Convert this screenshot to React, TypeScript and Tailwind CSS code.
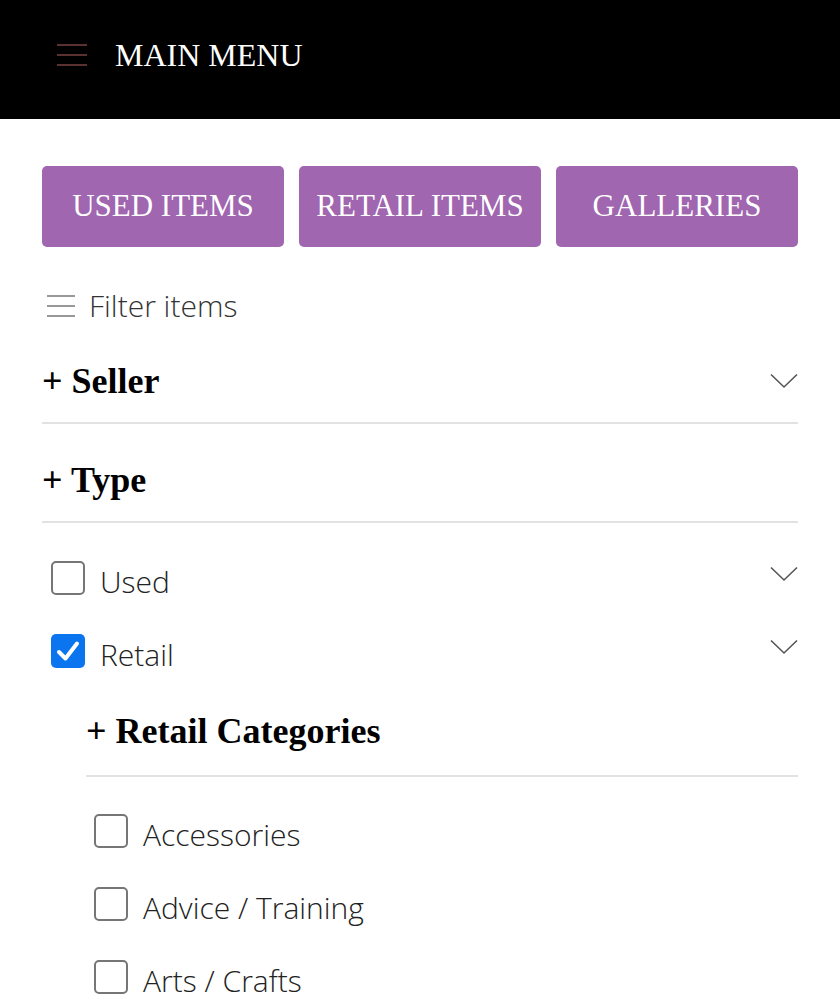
import * as React from "react"

const serif = "font-['Liberation_Serif','DejaVu_Serif',serif]"
const sans = "font-['Open_Sans','Noto_Sans',sans-serif]"

function Chevron() {
  return (
    <svg width="28" height="16" viewBox="0 0 28 16" fill="none" className="shrink-0">
      <path d="M1 1.5 L14 14 L27 1.5" stroke="#555" strokeWidth="1.6" />
    </svg>
  )
}

function Box({ checked }: { checked?: boolean }) {
  if (checked) {
    return (
      <span className="flex h-[34px] w-[34px] shrink-0 items-center justify-center rounded-[5px] bg-[#0b74ef]">
        <svg width="24" height="22" viewBox="0 0 24 22" fill="none">
          <path d="M3 12 L9.5 18.5 L21 3.5" stroke="white" strokeWidth="4" strokeLinecap="round" strokeLinejoin="round" />
        </svg>
      </span>
    )
  }
  return <span className="h-[34px] w-[34px] shrink-0 rounded-[5px] border-2 border-[#767676] bg-white" />
}

function CheckRow({ label, checked, chevron }: { label: string; checked?: boolean; chevron?: boolean }) {
  return (
    <div className="flex h-[73px] items-center">
      <Box checked={checked} />
      <span className={`ml-[15px] mt-[8px] flex-1 text-[30px] font-light leading-none text-[#222] ${sans}`}>{label}</span>
      {chevron && <span className="-mt-[8px]"><Chevron /></span>}
    </div>
  )
}

function Section({ title, chevron, className }: { title: string; chevron?: boolean; className: string }) {
  return (
    <div className={`flex items-center border-b-2 border-[#e2e2e2] ${className}`}>
      <h3 className={`flex-1 text-[36px] font-bold leading-none text-black ${serif}`}>+ {title}</h3>
      {chevron && <Chevron />}
    </div>
  )
}

export default function App() {
  const cats = ["Accessories", "Advice / Training", "Arts / Crafts"]
  return (
    <div className="h-[996px] w-[840px] overflow-hidden bg-white">
      <header className="flex h-[119px] items-center bg-black pb-[10px] pl-[57px]">
        <svg width="30" height="22" viewBox="0 0 30 22" className="shrink-0">
          <path d="M0 1h30M0 11h30M0 21h30" stroke="#7a4040" strokeWidth="1.6" />
        </svg>
        <span className={`ml-[28px] text-[32px] leading-none text-white ${serif}`}>MAIN MENU</span>
      </header>

      <main className="px-[42px] pt-[47px]">
        <div className="grid grid-cols-3 gap-[15px]">
          {["USED ITEMS", "RETAIL ITEMS", "GALLERIES"].map((b) => (
            <button
              key={b}
              className={`h-[81px] rounded-[5px] bg-[#a066b0] text-[31px] text-white ${serif}`}
            >
              {b}
            </button>
          ))}
        </div>

        <div className="mt-[39px] flex h-[40px] items-center pl-[5px]">
          <svg width="28" height="22" viewBox="0 0 28 22" className="shrink-0">
            <path d="M0 1h28M0 11h28M0 21h28" stroke="#777" strokeWidth="1.4" />
          </svg>
          <span className={`ml-[14px] text-[30px] font-light leading-none text-[#333] ${sans}`}>Filter items</span>
        </div>

        <Section title="Seller" chevron className="h-[98px] pt-[14px]" />
        <Section title="Type" className="h-[99px] pt-[14px]" />

        <div className="pl-[9px] pt-[18px]">
          <CheckRow label="Used" chevron />
          <CheckRow label="Retail" checked chevron />
        </div>

        <div className="pl-[44px]">
          <Section title="Retail Categories" className="h-[90px] pt-[0px]" />
          <div className="pl-[8px] pt-[17px]">
            {cats.map((c) => (
              <CheckRow key={c} label={c} />
            ))}
          </div>
        </div>
      </main>
    </div>
  )
}
